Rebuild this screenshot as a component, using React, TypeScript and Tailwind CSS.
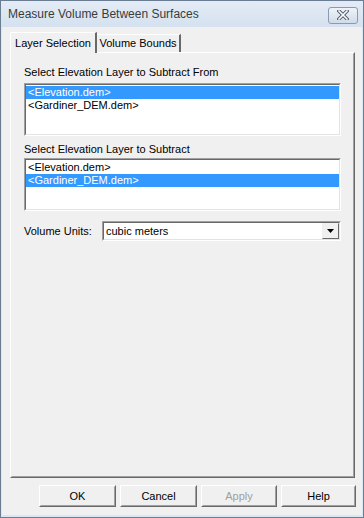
import React, { useState } from "react";

const font = { fontFamily: '"Liberation Sans", Arial, sans-serif' };

const layers = ["<Elevation.dem>", "<Gardiner_DEM.dem>"];

const ListBox: React.FC<{ selected: number; onSelect: (i: number) => void }> = ({
  selected,
  onSelect,
}) => (
  <div className="h-[53px] border border-t-[#a0a0a0] border-l-[#a0a0a0] border-r-white border-b-white">
    <div className="h-full border border-t-[#696969] border-l-[#696969] border-r-[#e3e3e3] border-b-[#e3e3e3] bg-white pt-px">
      {layers.map((l, i) => (
        <div
          key={l}
          onClick={() => onSelect(i)}
          className={`h-[13px] pl-[2px] text-[11px] leading-[13px] ${
            i === selected ? "bg-[#3399ff] text-white" : "text-black"
          }`}
        >
          {l}
        </div>
      ))}
    </div>
  </div>
);

const Btn: React.FC<{ label: string; disabled?: boolean; w: string }> = ({ label, disabled, w }) => (
  <div className={`${w} h-[22px] border border-t-white border-l-white border-r-[#696969] border-b-[#696969]`}>
    <div
      className={`h-full flex items-center justify-center border border-t-[#f0f0f0] border-l-[#f0f0f0] border-r-[#a0a0a0] border-b-[#a0a0a0] text-[11px] ${
        disabled ? "text-[#a0a0a0]" : "text-black"
      }`}
    >
      {label}
    </div>
  </div>
);

export default function App() {
  const [from, setFrom] = useState(0);
  const [sub, setSub] = useState(1);
  const [tab, setTab] = useState(0);

  return (
    <div style={font} className="w-[364px] h-[518px] flex flex-col bg-[#dbe6f3] border border-[#6b7d92]">
      {/* title bar */}
      <div className="h-[26px] flex items-center justify-between pl-[7px] pr-[5px] bg-gradient-to-b from-[#e3ecf6] to-[#d5e1ef]">
        <span className="text-[12px] text-[#3b3b3b]">Measure Volume Between Surfaces</span>
        <div className="w-[30px] h-[17px] mt-[2px] rounded-[3px] border border-[#8a9ab0] bg-gradient-to-b from-[#eef3f9] to-[#d0dcea] flex items-center justify-center">
          <svg width="12" height="10" viewBox="0 0 12 10">
            <path d="M2 1 L10 9 M10 1 L2 9" stroke="#4d5766" strokeWidth="3.4" strokeLinecap="square" />
            <path d="M2 1 L10 9 M10 1 L2 9" stroke="#ffffff" strokeWidth="1.6" strokeLinecap="square" />
          </svg>
        </div>
      </div>

      {/* client */}
      <div className="flex-1 ml-[1px] mr-[1px] mb-[2px] bg-[#f0f0f0] flex flex-col pl-[8px] pr-[5px] pt-[5px]">
        {/* tabs */}
        <div className="flex items-end h-[21px] relative z-10 -mb-px">
          <div
            onClick={() => setTab(0)}
            className="h-[21px] w-[87px] bg-[#f0f0f0] border-t border-l border-white border-r-2 border-r-[#696969] rounded-tl-[2px] flex items-center justify-center text-[11px] text-black"
          >
            Layer Selection
          </div>
          <div
            onClick={() => setTab(1)}
            className="h-[18px] w-[84px] bg-[#f0f0f0] border-t border-white border-r-2 border-r-[#696969] mb-px flex items-center justify-center text-[11px] text-black"
          >
            Volume Bounds
          </div>
        </div>

        {/* panel */}
        <div className="h-[426px] w-[345px] border border-t-white border-l-white border-r-[#696969] border-b-[#696969]">
          <div className="h-full border border-t-[#f0f0f0] border-l-[#f0f0f0] border-r-[#a0a0a0] border-b-[#a0a0a0] pl-[12px] pr-[12px] pt-[12px]">
            {tab === 0 && (
              <>
                <div className="text-[11px] leading-[13px] text-black mb-[4px]">Select Elevation Layer to Subtract From</div>
                <ListBox selected={from} onSelect={setFrom} />
                <div className="text-[11px] leading-[13px] text-black mt-[7px] mb-[2px]">Select Elevation Layer to Subtract</div>
                <ListBox selected={sub} onSelect={setSub} />
                <div className="flex items-center mt-[10px]">
                  <span className="w-[78px] text-[11px] text-black">Volume Units:</span>
                  <div className="flex-1 h-[20px] border border-t-[#a0a0a0] border-l-[#a0a0a0] border-r-white border-b-white">
                    <div className="h-full flex items-center bg-white border border-t-[#696969] border-l-[#696969] border-r-[#e3e3e3] border-b-[#e3e3e3]">
                      <span className="flex-1 pl-[2px] text-[11px] text-black">cubic meters</span>
                      <div className="w-[17px] h-[16px] bg-[#f0f0f0] border border-t-[#f0f0f0] border-l-[#f0f0f0] border-r-[#696969] border-b-[#696969] flex items-center justify-center">
                        <svg width="7" height="4" viewBox="0 0 7 4">
                          <path d="M0 0 H7 L3.5 4 Z" fill="#000" />
                        </svg>
                      </div>
                    </div>
                  </div>
                </div>
              </>
            )}
          </div>
        </div>

        {/* buttons */}
        <div className="flex justify-end gap-[4px] mt-[7px] pr-[1px]">
          <Btn label="OK" w="w-[77px]" />
          <Btn label="Cancel" w="w-[77px]" />
          <Btn label="Apply" w="w-[76px]" disabled />
          <Btn label="Help" w="w-[75px]" />
        </div>
      </div>
    </div>
  );
}
